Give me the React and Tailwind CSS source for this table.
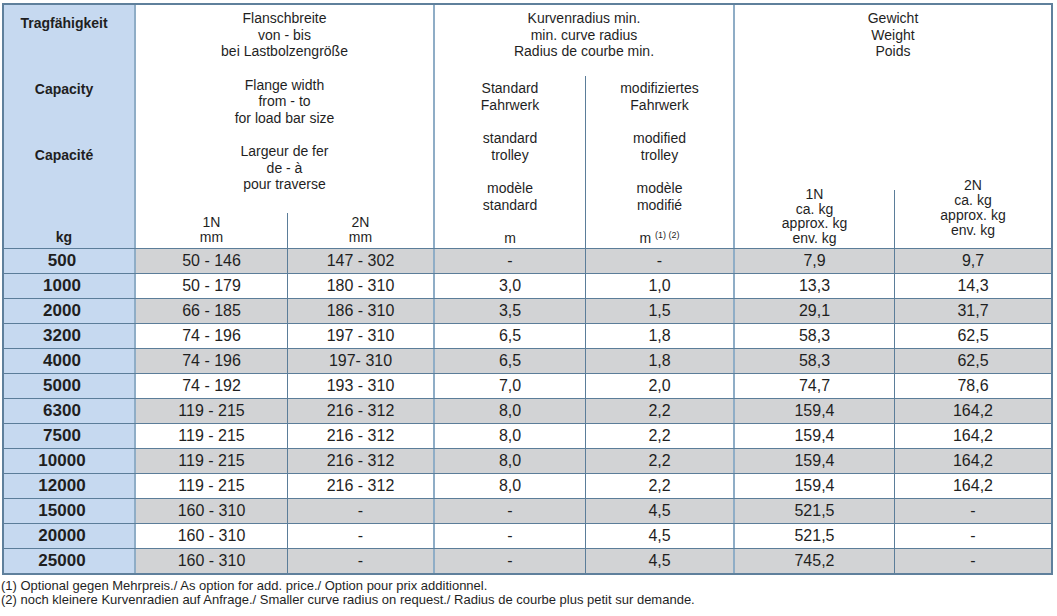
import React from 'react';

const rows = [
  ['500', '50 - 146', '147 - 302', '-', '-', '7,9', '9,7'],
  ['1000', '50 - 179', '180 - 310', '3,0', '1,0', '13,3', '14,3'],
  ['2000', '66 - 185', '186 - 310', '3,5', '1,5', '29,1', '31,7'],
  ['3200', '74 - 196', '197 - 310', '6,5', '1,8', '58,3', '62,5'],
  ['4000', '74 - 196', '197- 310', '6,5', '1,8', '58,3', '62,5'],
  ['5000', '74 - 192', '193 - 310', '7,0', '2,0', '74,7', '78,6'],
  ['6300', '119 - 215', '216 - 312', '8,0', '2,2', '159,4', '164,2'],
  ['7500', '119 - 215', '216 - 312', '8,0', '2,2', '159,4', '164,2'],
  ['10000', '119 - 215', '216 - 312', '8,0', '2,2', '159,4', '164,2'],
  ['12000', '119 - 215', '216 - 312', '8,0', '2,2', '159,4', '164,2'],
  ['15000', '160 - 310', '-', '-', '4,5', '521,5', '-'],
  ['20000', '160 - 310', '-', '-', '4,5', '521,5', '-'],
  ['25000', '160 - 310', '-', '-', '4,5', '745,2', '-'],
];

// group lines are light blue 2px, sub lines are dark 1px
const cellWidths = [
  'w-[153px] border-l-2 border-[#8fadc6]',
  'w-[146px] border-l border-[#5b7d99]',
  'w-[152px] border-l-2 border-[#8fadc6]',
  'w-[148px] border-l border-[#5b7d99]',
  'w-[161px] border-l-2 border-[#8fadc6]',
  'flex-1 border-l border-[#5b7d99]',
];

const Header = () => (
  <div className="flex h-[243px] text-[14px]">
    {/* Capacity column */}
    <div className="w-[130px] bg-[#c6d9f0] flex flex-col items-center pr-[10px] font-bold leading-[16px]">
      <div className="mt-[10px]">Tragfähigkeit</div>
      <div className="mt-[50px]">Capacity</div>
      <div className="mt-[50px]">Capacité</div>
      <div className="mt-[66px]">kg</div>
    </div>

    {/* Flange width */}
    <div className="w-[299px] border-l-2 border-[#8fadc6] flex flex-col text-center leading-[16.5px]">
      <div className="mt-[5px]">
        Flanschbreite<br />von - bis<br />bei Lastbolzengröße
      </div>
      <div className="mt-[17px]">
        Flange width<br />from - to<br />for load bar size
      </div>
      <div className="mt-[17px]">
        Largeur de fer<br />de - à<br />pour traverse
      </div>
      <div className="mt-auto flex h-[35px] leading-[15px]">
        <div className="w-[152px] border-r border-[#5b7d99] pt-[2px]">1N<br />mm</div>
        <div className="flex-1 pt-[2px]">2N<br />mm</div>
      </div>
    </div>

    {/* Curve radius */}
    <div className="w-[300px] border-l-2 border-[#8fadc6] flex flex-col text-center leading-[16.5px]">
      <div className="mt-[5px]">
        Kurvenradius min.<br />min. curve radius<br />Radius de courbe min.
      </div>
      <div className="mt-[16.5px] flex-1 flex">
        <div className="w-[151px] border-r border-[#5b7d99] pt-[4px]">
          <div>Standard<br />Fahrwerk</div>
          <div className="mt-[17px]">standard<br />trolley</div>
          <div className="mt-[17px]">modèle<br />standard</div>
          <div className="mt-[17px]">m</div>
        </div>
        <div className="flex-1 pt-[4px]">
          <div>modifiziertes<br />Fahrwerk</div>
          <div className="mt-[17px]">modified<br />trolley</div>
          <div className="mt-[17px]">modèle<br />modifié</div>
          <div className="mt-[17px]">
            m <sup className="text-[9px] -top-[5px]">(1) (2)</sup>
          </div>
        </div>
      </div>
    </div>

    {/* Weight */}
    <div className="flex-1 border-l-2 border-[#8fadc6] flex flex-col text-center leading-[16.5px]">
      <div className="mt-[5px]">
        Gewicht<br />Weight<br />Poids
      </div>
      <div className="mt-auto h-[70px] flex">
        <div className="w-[160px] mt-[12px] border-r border-[#5b7d99] leading-[14.7px]">
          <div className="-mt-[3px]">1N<br />ca. kg<br />approx. kg<br />env. kg</div>
        </div>
        <div className="flex-1 leading-[15px]">
          2N<br />ca. kg<br />approx. kg<br />env. kg
        </div>
      </div>
    </div>
  </div>
);

const App = () => {
  return (
    <div className="w-[1057px] h-[616px] bg-white text-[#1f1f1f] font-['Liberation_Sans',Arial,sans-serif] overflow-hidden">
      <div className="ml-[2px] mt-[3px] w-[1051px] border-2 border-[#5f809c]">
        <Header />
        {rows.map((row, idx) => {
          const grey = idx % 2 === 0;
          return (
            <div key={row[0]} className="flex h-[25px] border-t border-[#5b7d99]">
              <div className="w-[130px] bg-[#c6d9f0] flex items-center justify-center pr-[14px] text-[17px] font-bold">
                {row[0]}
              </div>
              {row.slice(1).map((val, i) => (
                <div
                  key={i}
                  className={`${cellWidths[i]} ${grey ? 'bg-[#d2d3d5]' : 'bg-white'} flex items-center justify-center text-[16px]`}
                >
                  {val}
                </div>
              ))}
            </div>
          );
        })}
      </div>

      {/* Footnotes */}
      <div className="mt-[4px] pl-[1px] text-[13px] leading-[14px]">
        <p>(1) Optional gegen Mehrpreis./ As option for add. price./ Option pour prix additionnel.</p>
        <p>(2) noch kleinere Kurvenradien auf Anfrage./ Smaller curve radius on request./ Radius de courbe plus petit sur demande.</p>
      </div>
    </div>
  );
};

export default App;
